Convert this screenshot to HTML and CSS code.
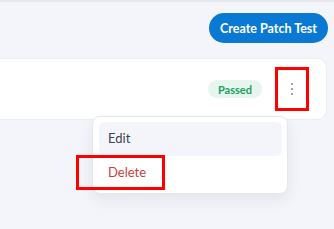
FILE: index.html
```html
<!DOCTYPE html>
<html lang="en">
<head>
  <meta charset="UTF-8">
  <title>Patch Tests</title>
  <link rel="stylesheet" href="styles.css">
</head>
<body>
  <div class="page">
    <div class="toolbar">
      <button class="create-btn">Create Patch Test</button>
    </div>

    <div class="card">
      <span class="badge">Passed</span>
      <button class="kebab">
        <span></span><span></span><span></span>
      </button>
    </div>

    <div class="menu">
      <div class="menu-item active">Edit</div>
      <div class="menu-item danger">Delete</div>
    </div>
    <div class="mark mark-delete"></div>
  </div>
</body>
</html>
```

FILE: styles.css
```css
body {
  margin: 0;
  padding: 0;
  font-family: Lato, "Open Sans", sans-serif;
  background: #f4f5fa;
}
.page {
  position: relative;
  height: 229px;
  border-top: 2px solid #e6e8ee;
  box-sizing: border-box;
}
.toolbar {
  display: flex;
  justify-content: flex-end;
  padding: 11px 6px 0 0;
}
.create-btn {
  height: 30px;
  width: 119px;
  border: none;
  border-radius: 15px;
  background: #0a79d3;
  color: white;
  font-family: inherit;
  font-size: 12.5px;
  font-weight: bold;
  padding: 0;
}
.card {
  display: flex;
  align-items: center;
  justify-content: flex-end;
  gap: 13px;
  height: 62px;
  margin: 15px 7px 0 -12px;
  padding-right: 17px;
  background: white;
  border: 1px solid #eceef4;
  border-radius: 10px;
  box-sizing: border-box;
}
.badge {
  display: inline-flex;
  align-items: center;
  height: 18px;
  padding: 0 10px;
  border-radius: 9px;
  background: #e6f6ee;
  color: #21a05f;
  font-size: 11px;
  font-weight: bold;
}
.kebab {
  display: flex;
  flex-direction: column;
  align-items: center;
  justify-content: center;
  gap: 3.5px;
  width: 34px;
  height: 44px;
  padding: 0;
  background: white;
  border: 3px solid #ff0000;
  box-sizing: border-box;
}
.kebab span {
  width: 1.5px;
  height: 1.5px;
  border-radius: 1px;
  background: #7d8696;
}
.menu {
  position: absolute;
  left: 92px;
  top: 114px;
  width: 196px;
  padding: 5px 5px 3px 6px;
  background: white;
  border: 1px solid #e4e7ee;
  border-radius: 8px;
  box-shadow: 0 6px 14px rgba(30, 40, 70, 0.08);
  box-sizing: border-box;
}
.menu-item {
  height: 34px;
  line-height: 33px;
  padding-left: 9px;
  font-size: 13px;
  border-radius: 6px;
  color: #3a4254;
  box-sizing: border-box;
}
.menu-item.active {
  background: #f4f5fa;
}
.menu-item.danger {
  color: #c53f3e;
}
.mark {
  position: absolute;
  border: 3px solid #ff0000;
  box-sizing: border-box;
}
.mark-delete {
  left: 76px;
  top: 153px;
  width: 89px;
  height: 35px;
}
```
